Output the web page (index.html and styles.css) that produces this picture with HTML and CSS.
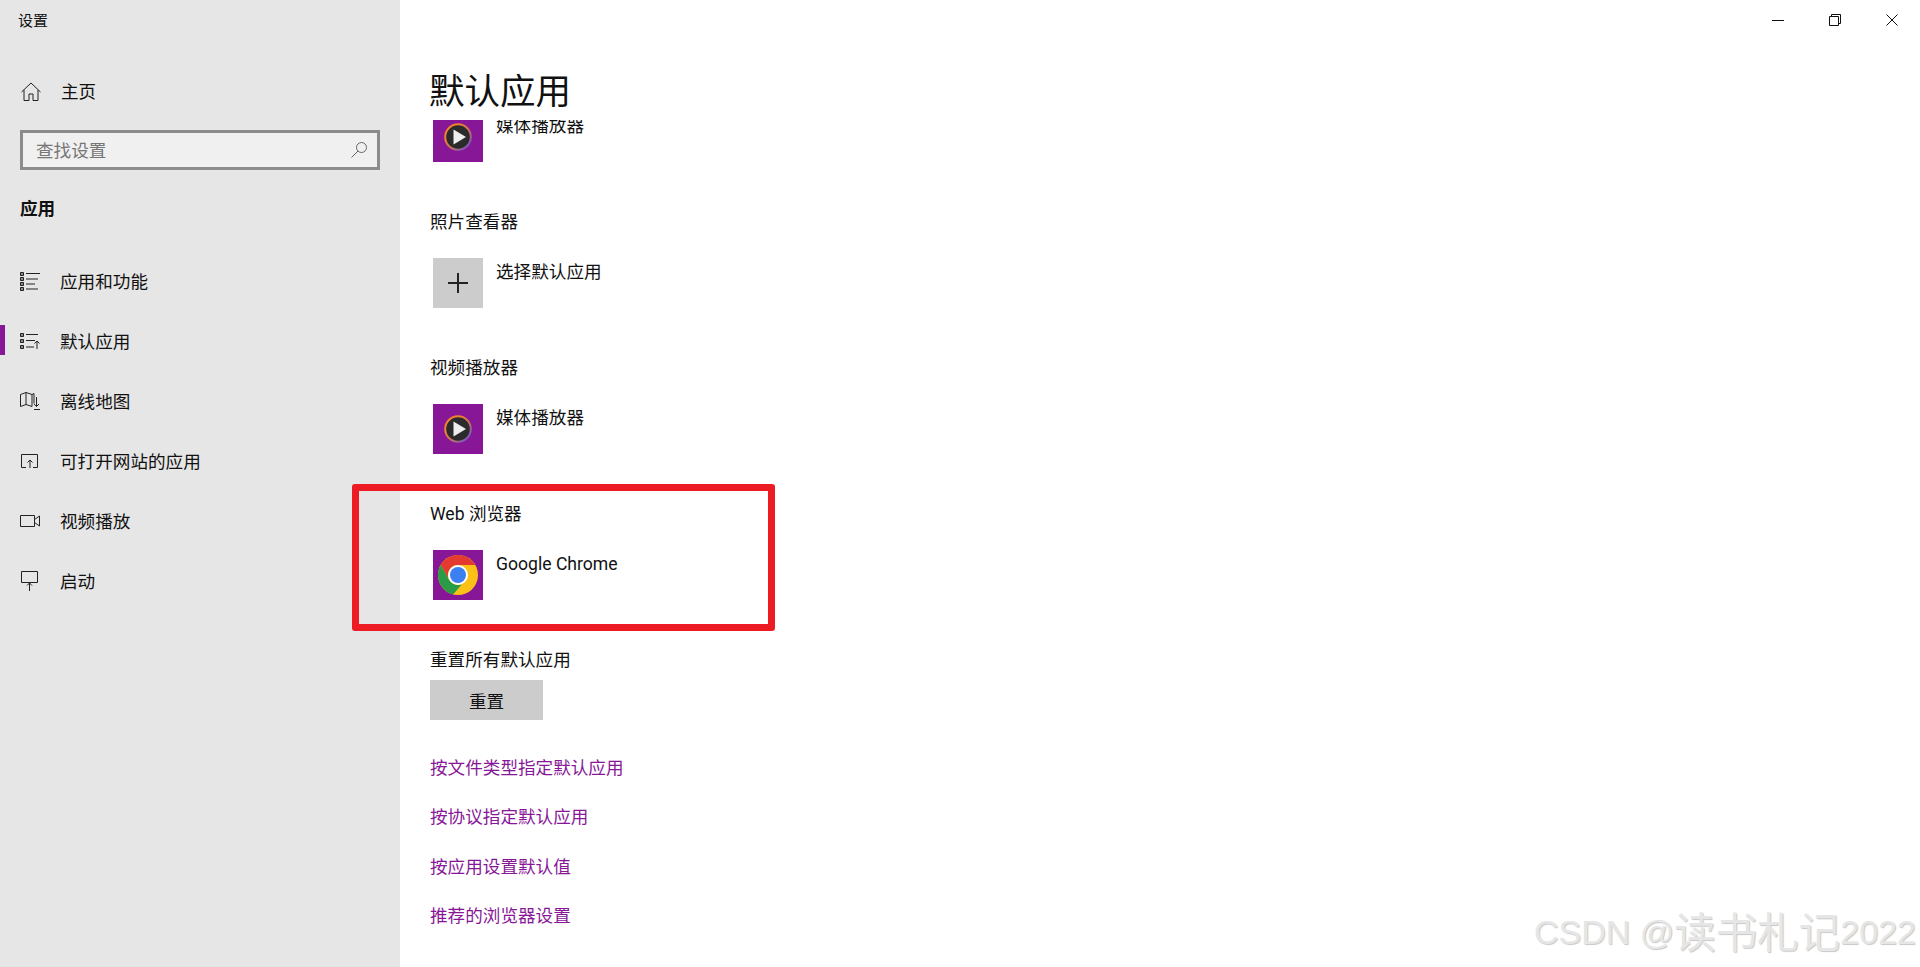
FILE: index.html
```html
<!DOCTYPE html>
<html lang="zh-CN">
<head>
    <meta charset="UTF-8">
    <meta name="viewport" content="width=device-width, initial-scale=1.0">
    <title>设置</title>
    <link rel="stylesheet" href="styles.css">
</head>
<body>
    <div class="app">
        <aside class="sidebar">
            <div class="app-title">设置</div>
            <a class="home-link">
                <svg class="icon" viewBox="0 0 20 20"><path d="M0.500 10 10 1l9.500 9M3 8v10.500h5V12h4v6.500h5V8"/></svg>
                <span>主页</span>
            </a>
            <div class="search">
                <span class="search-text">查找设置</span>
                <svg class="search-icon" viewBox="0 0 18 18"><circle cx="11.500" cy="6.500" r="5"/><path d="M8 10 1.500 16.500"/></svg>
            </div>
            <div class="section-title">应用</div>
            <nav class="nav">
                <a class="nav-item">
                    <svg class="icon" viewBox="0 0 20 20"><path class="dots" d="M0.500 1.500h3v3h-3zM0.500 6.500h3v3h-3zM0.500 11.500h3v3h-3zM0.500 16.500h3v3h-3z"/><path d="M6 2.500h14M6 8h12M6 13h9M6 18h12"/></svg>
                    <span>应用和功能</span>
                </a>
                <a class="nav-item active">
                    <svg class="icon" viewBox="0 0 20 20"><path class="dots" d="M0.500 2.500h3v3h-3zM0.500 8.500h3v3h-3zM0.500 14.500h3v3h-3z"/><path d="M6 3.500h12M6 9.500h9M6 16h8M17 18v-8M14.500 12.500 17 10l2.500 2.500"/></svg>
                    <span>默认应用</span>
                </a>
                <a class="nav-item">
                    <svg class="icon" viewBox="0 0 20 20"><path d="M0.500 3.500 6 1.500l6 2 2-1v10M0.500 3.500v12l5.500-2 6 2M6 1.500v12M12 3.500v12M16.500 6v9.500M14 13l2.500 2.500L19 13M14 18.500h6"/></svg>
                    <span>离线地图</span>
                </a>
                <a class="nav-item">
                    <svg class="icon" viewBox="0 0 20 20"><path d="M6 16.500H1.500v-13h16v13H13M10 17V9M7.500 11.500 10 9l2.500 2.500"/></svg>
                    <span>可打开网站的应用</span>
                </a>
                <a class="nav-item">
                    <svg class="icon" viewBox="0 0 20 20"><path d="M0.500 4.500h14v11h-14zM14.500 8.500l5-3.500v10l-5-3.500"/></svg>
                    <span>视频播放</span>
                </a>
                <a class="nav-item">
                    <svg class="icon" viewBox="0 0 20 20"><path d="M1.500 0.500h16v11h-16zM9.500 20v-8M7 14.500 9.500 12l2.500 2.500"/></svg>
                    <span>启动</span>
                </a>
            </nav>
        </aside>

        <main class="content">
            <div class="window-controls">
                <div class="window-btn"><svg viewBox="0 0 12 12"><path d="M0 6.500h12"/></svg></div>
                <div class="window-btn"><svg viewBox="0 0 12 12"><path d="M0.500 2.500h9v9h-9zM2.500 2.500v-2h9v9h-2"/></svg></div>
                <div class="window-btn"><svg viewBox="0 0 12 12"><path d="M0.500 0.500l11 11M11.500 0.500l-11 11"/></svg></div>
            </div>
            <h1 class="page-title">默认应用</h1>
            <div class="scroller">
                <div class="scroll-inner">
                    <div class="app-row">
                        <div class="tile">
                            <svg class="tile-img" viewBox="0 0 50 50"><use href="#media-icon"/></svg>
                        </div>
                        <span class="app-name">媒体播放器</span>
                    </div>

                    <div class="group-title">照片查看器</div>
                    <div class="app-row">
                        <div class="tile tile-add">
                            <svg class="plus" viewBox="0 0 20 20"><path d="M10 0v20M0 10h20"/></svg>
                        </div>
                        <span class="app-name">选择默认应用</span>
                    </div>

                    <div class="group-title">视频播放器</div>
                    <div class="app-row">
                        <div class="tile">
                            <svg class="tile-img" viewBox="0 0 50 50">
                                <defs>
                                    <linearGradient id="ring" x1="0" y1="0" x2="1" y2="1">
                                        <stop offset="0.3" stop-color="#f0812e"/>
                                        <stop offset="0.6" stop-color="#c0705e"/>
                                        <stop offset="0.9" stop-color="#7558c8"/>
                                    </linearGradient>
                                    <g id="media-icon">
                                        <circle cx="25" cy="25" r="12.800" fill="#2b2b2b" stroke="url(#ring)" stroke-width="2"/>
                                        <path d="M20.500 17.500 33 25l-12.500 7.500z" fill="#eeeeee"/>
                                    </g>
                                </defs>
                                <use href="#media-icon"/>
                            </svg>
                        </div>
                        <span class="app-name">媒体播放器</span>
                    </div>

                    <div class="group-title">Web 浏览器</div>
                    <div class="app-row">
                        <div class="tile">
                            <svg class="tile-img" viewBox="0 0 50 50">
                                <circle cx="25" cy="25" r="20" fill="#fbc116"/>
                                <path d="M7.700 15A20 20 0 0 1 42.300 15H25A10 10 0 0 0 16.300 30z" fill="#e53a30"/>
                                <path d="M7.700 15 16.300 30A10 10 0 0 0 29 34.200L20 44.400A20 20 0 0 1 7.700 15z" fill="#2a9b47"/>
                                <circle cx="25" cy="25" r="10" fill="#ffffff"/>
                                <circle cx="25" cy="25" r="8" fill="#3b7ff0"/>
                            </svg>
                        </div>
                        <span class="app-name">Google Chrome</span>
                    </div>

                    <div class="group-title">重置所有默认应用</div>
                    <button class="reset-btn" type="button">重置</button>

                    <div class="links">
                        <a class="link">按文件类型指定默认应用</a>
                        <a class="link">按协议指定默认应用</a>
                        <a class="link">按应用设置默认值</a>
                        <a class="link">推荐的浏览器设置</a>
                    </div>
                </div>
            </div>
        </main>
    </div>

    <div class="highlight"></div>
    <div class="watermark">CSDN @<span class="watermark-cjk">读书札记</span>2022</div>
</body>
</html>
```

FILE: styles.css
```css
* {
    box-sizing: border-box;
}
html, body {
    margin: 0;
    height: 100%;
    overflow: hidden;
}
body {
    position: relative;
    font-family: Roboto, "Noto Sans CJK SC", sans-serif;
    font-size: 17.6px;
    color: #111111;
    background: #ffffff;
}
.app {
    display: flex;
    height: 967px;
}
svg {
    display: block;
    fill: none;
    stroke: #222222;
    stroke-width: 1;
}

/* left column */
.sidebar {
    width: 400px;
    flex-shrink: 0;
    background: #e6e6e6;
}
.app-title {
    height: 40px;
    line-height: 42px;
    padding-left: 18px;
    font-size: 15px;
}
.home-link {
    display: flex;
    align-items: center;
    gap: 20px;
    height: 60px;
    margin-top: 22px;
    padding-left: 21px;
}
.home-link span {
    margin-top: -4px;
}
.icon {
    width: 20px;
    height: 20px;
    flex-shrink: 0;
}
.dots {
    fill: #8a8a8a;
}
.search {
    display: flex;
    align-items: center;
    justify-content: space-between;
    width: 360px;
    height: 40px;
    margin: 8px 0 0 20px;
    padding: 0 9px 0 13px;
    background: #f0f0f0;
    border: 3px solid #8c8c8c;
}
.search-text {
    margin-top: -2px;
    color: #767676;
}
.search-icon {
    width: 18px;
    height: 18px;
    stroke: #666666;
}
.section-title {
    height: 30px;
    line-height: 30px;
    margin-top: 24px;
    padding-left: 20px;
    font-weight: 700;
}
.nav {
    margin-top: 27px;
}
.nav-item {
    position: relative;
    display: flex;
    align-items: center;
    gap: 20px;
    height: 60px;
    padding-left: 20px;
}
.nav-item span {
    margin-top: -1px;
}
.nav-item.active::before {
    content: "";
    position: absolute;
    left: 0;
    top: 14px;
    width: 5px;
    height: 30px;
    background: #881798;
}

/* right column */
.content {
    flex: 1;
    display: flex;
    flex-direction: column;
    padding-left: 30px;
}
.window-controls {
    display: flex;
    justify-content: flex-end;
    height: 40px;
}
.window-btn {
    display: flex;
    align-items: center;
    justify-content: center;
    width: 57px;
}
.window-btn svg {
    width: 12px;
    height: 12px;
    stroke: #111111;
}
.page-title {
    height: 50px;
    line-height: 50px;
    margin: 27px 0 0 -1px;
    font-size: 35.5px;
    font-weight: 400;
}
.scroller {
    flex: 1;
    margin-top: 3px;
    overflow: hidden;
}
.scroll-inner {
    margin-top: -8px;
}
.app-row {
    display: flex;
    gap: 13px;
    margin-left: 3px;
}
.tile {
    display: flex;
    align-items: center;
    justify-content: center;
    width: 50px;
    height: 50px;
    background: #881798;
}
.tile-img {
    width: 50px;
    height: 50px;
    stroke: none;
}
.tile-add {
    background: #cccccc;
}
.plus {
    width: 20px;
    height: 20px;
    stroke-width: 2;
}
.app-name {
    line-height: 28px;
}
.group-title {
    height: 30px;
    line-height: 30px;
    margin: 45px 0 21px;
}
.group-title:nth-last-of-type(2) {
    margin: 44px 0 6px;
    line-height: 32px;
}
.reset-btn {
    display: block;
    width: 113px;
    height: 40px;
    padding: 0;
    border: none;
    background: #cccccc;
    color: #111111;
    font: inherit;
}
.links {
    display: flex;
    flex-direction: column;
    gap: 19.3px;
    margin-top: 33px;
}
.link {
    height: 30px;
    line-height: 30px;
    color: #881798;
}

/* overlays added on the screenshot */
.highlight {
    position: absolute;
    left: 352px;
    top: 484px;
    width: 423px;
    height: 147px;
    border: 7px solid #ed1c24;
    border-radius: 3px;
}
.watermark {
    position: absolute;
    right: 4px;
    top: 907px;
    font-family: "Liberation Sans", "Noto Sans CJK SC", sans-serif;
    font-size: 34px;
    line-height: 50px;
    color: #e6e6e6;
    text-shadow: 1px 1px 1px #c8c8c8;
    white-space: nowrap;
}
.watermark-cjk {
    font-size: 41.5px;
    vertical-align: -4px;
}
```
